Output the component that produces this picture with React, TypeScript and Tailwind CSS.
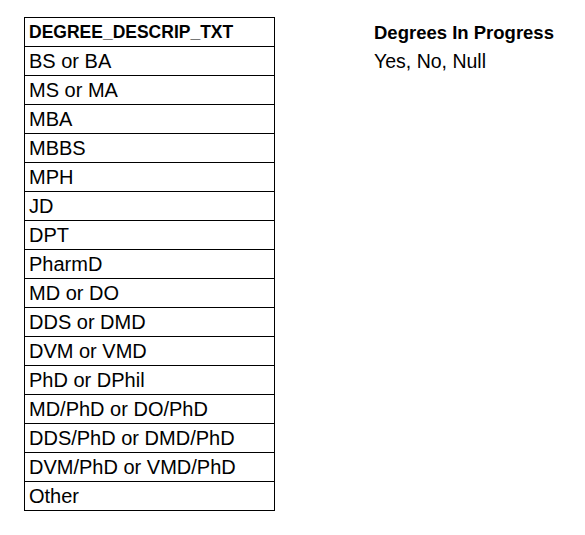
import React from "react";

const rows = [
  "BS or BA",
  "MS or MA",
  "MBA",
  "MBBS",
  "MPH",
  "JD",
  "DPT",
  "PharmD",
  "MD or DO",
  "DDS or DMD",
  "DVM or VMD",
  "PhD or DPhil",
  "MD/PhD or DO/PhD",
  "DDS/PhD or DMD/PhD",
  "DVM/PhD or VMD/PhD",
  "Other",
];

export default function App() {
  return (
    <div
      className="w-[585px] h-[535px] bg-white text-black flex items-start pl-[24px] pt-[17px]"
      style={{ fontFamily: '"Liberation Sans", Arial, sans-serif' }}
    >
      <div className="w-[251px] border-t border-l border-r border-black flex flex-col">
        <div className="h-[29px] border-b border-black pl-[4px] text-[17.5px] font-bold leading-[29px] whitespace-nowrap">
          DEGREE_DESCRIP_TXT
        </div>
        {rows.map((r) => (
          <div
            key={r}
            className="h-[29px] border-b border-black pl-[4px] text-[20px] leading-[29px] whitespace-nowrap"
          >
            {r}
          </div>
        ))}
      </div>
      <div className="ml-[99px] flex flex-col pt-[1px]">
        <div className="h-[29px] text-[18.5px] font-bold leading-[29px] whitespace-nowrap">
          Degrees In Progress
        </div>
        <div className="h-[29px] text-[19.5px] leading-[29px] whitespace-nowrap">
          Yes, No, Null
        </div>
      </div>
    </div>
  );
}
